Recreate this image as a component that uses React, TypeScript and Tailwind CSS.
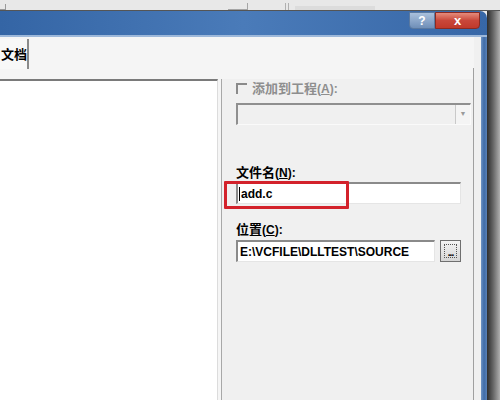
const ui = {
  fontFamily: '"Liberation Sans", "Noto Sans CJK SC", sans-serif',
};

function TitleBar() {
  return (
    <div className="h-[26px] relative rounded-tr-[7px] bg-gradient-to-r from-[#3465a5] via-[#4a7bb9] to-[#3767a7] border-b-2 border-[#9db8da]">
      <div className="absolute right-[7px] top-[1px] flex">
        <div className="w-[26px] h-[17px] rounded-bl-[4px] border border-[#5a79a0] bg-gradient-to-b from-[#a9c0dc] to-[#6f8fb8] flex items-center justify-center text-white text-[12px] font-bold leading-none">
          ?
        </div>
        <div className="w-[45px] h-[17px] rounded-br-[4px] border border-[#8c2a22] bg-gradient-to-b from-[#e58b7c] via-[#c9473a] to-[#c0392b] flex items-center justify-center text-white text-[13px] font-bold leading-none">
          x
        </div>
      </div>
    </div>
  );
}

function Label({ cjk, hot, disabled }: { cjk: string; hot: string; disabled?: boolean }) {
  return (
    <div
      className={`text-[12px] font-bold leading-[14px] ${disabled ? "text-[#8e8e8e]" : "text-black"}`}
    >
      <span className="text-[13px]" style={{ fontFamily: '"Noto Sans CJK SC", sans-serif' }}>
        {cjk}
      </span>
      (<span className="underline">{hot}</span>):
    </div>
  );
}

export default function App() {
  return (
    <div className="w-[500px] h-[400px] overflow-hidden flex flex-col bg-[#ebebeb]" style={ui}>
      <div className="h-[11px] shrink-0 bg-[#e8e8e8] border-b border-[#555] flex items-end">
        <div className="w-[6px] h-[6px] border-r border-b border-[#9a9a9a]" />
        <div className="ml-[222px] w-[20px] h-[7px] border-r border-b border-[#a5a5a5]" />
        <div className="ml-[37px] w-[4px] h-[7px] border-l border-r border-[#b0b0b0]" />
        <div className="ml-[6px] w-[80px] h-[4px] bg-[#dcdcdc]" />
      </div>
      <div className="flex flex-1 min-h-0">
        <div className="w-[487px] flex flex-col">
          <TitleBar />
          <div className="flex flex-1 min-h-0">
            <div className="flex-1 flex bg-[#f5f5f5]">
              {/* tab + document area */}
              <div className="w-[221px] flex flex-col">
                <div className="h-[42px] shrink-0 flex items-end">
                  <div className="h-[30px] w-[29px] border-r-2 border-[#8a8a8a] bg-[#f8f8f8] flex items-center pl-[1px] mb-[10px]">
                    <span
                      className="text-[13px] font-bold whitespace-nowrap"
                      style={{ fontFamily: '"Noto Sans CJK SC", sans-serif' }}
                    >
                      文档
                    </span>
                  </div>
                </div>
                <div className="flex-1 border-t-2 border-[#7a7a7a] border-r border-r-[#dcdcdc] bg-white mr-[3px]" />
              </div>
              {/* right side options */}
              <div className="flex-1 flex flex-col border-l border-[#a8a8a8] mt-[42px] bg-[#f0f0f0] pl-[14px] pr-[2px] pt-[2px]">
                <div className="flex items-center h-[14px] gap-[5px]">
                  <div className="w-[11px] h-[11px] border-l-2 border-t-2 border-[#8a8a8a]" />
                  <Label cjk="添加到工程" hot="A" disabled />
                </div>
                <div className="mt-[8px] h-[22px] border-l-2 border-t-2 border-[#8f8f8f] border-b border-r border-b-[#fafafa] border-r-[#fafafa] bg-[#f0f0f0] flex justify-end">
                  <div className="w-[15px] h-full border-l border-[#c9c9c9] bg-[#f4f4f4] flex items-center justify-center text-[#9a9a9a] text-[7px]">
                    ▼
                  </div>
                </div>
                <div className="mt-[40px]">
                  <Label cjk="文件名" hot="N" />
                </div>
                <div className="mt-[2px] relative mr-[10px]">
                  <div className="h-[22px] bg-white border-t-2 border-l-2 border-[#8a8a8a] border-r border-b border-r-[#e5e5e5] border-b-[#e5e5e5] flex items-center pl-[1px]">
                    <div className="w-px h-[14px] bg-black" />
                    <span className="ml-[1px] text-[12px] font-bold">add.c</span>
                  </div>
                  <div className="absolute -left-[12px] -top-[1px] w-[125px] h-[28px] border-[3px] border-[#d3222b] rounded-[1px]" />
                </div>
                <div className="mt-[18px]">
                  <Label cjk="位置" hot="C" />
                </div>
                <div className="mt-[3px] flex items-center gap-[5px] mr-[10px]">
                  <div className="flex-1 h-[22px] bg-white border-t-2 border-l-2 border-[#8a8a8a] border-r border-b border-r-[#e5e5e5] border-b-[#e5e5e5] flex items-center pl-[2px]">
                    <span className="text-[12px] font-bold whitespace-nowrap">E:\VCFILE\DLLTEST\SOURCE</span>
                  </div>
                  <div className="w-[21px] h-[22px] border border-[#6f6f6f] bg-gradient-to-b from-[#f4f4f4] to-[#d6d6d6] p-[3px]">
                    <div className="w-full h-full border border-dotted border-[#555] flex items-end justify-center">
                      <span className="text-[10px] font-bold leading-[8px] tracking-[-1px]">...</span>
                    </div>
                  </div>
                </div>
              </div>
              <div className="w-[1px] bg-[#a0a0a0] mt-[31px]" />
              <div className="w-[7px] bg-[#f0f0f0]" />
            </div>
            <div className="w-[6px] bg-gradient-to-r from-[#6f94c4] via-[#3f6ca8] to-[#5a82b8]" />
          </div>
        </div>
        <div className="flex-1 bg-gradient-to-r from-[#2e2e2e] via-[#6a6a6a] to-[#b0b0b0]" />
      </div>
    </div>
  );
}
